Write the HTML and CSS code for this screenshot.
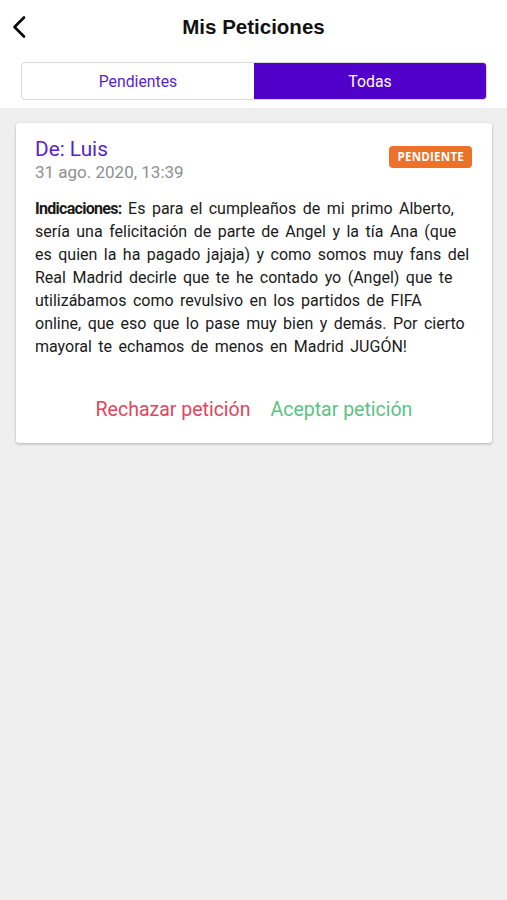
FILE: index.html
```html
<!DOCTYPE html>
<html lang="es">
<head>
<meta charset="utf-8">
<link rel="stylesheet" href="styles.css">
</head>
<body>
<div class="top">
  <header class="bar">
    <button class="back" aria-label="Atrás">
      <svg width="14" height="24" viewBox="0 0 14 24"><path d="M12 2.5 L2.5 12 L12 21.5" fill="none" stroke="#000" stroke-width="2.6" stroke-linecap="round" stroke-linejoin="round"/></svg>
    </button>
    <h1 class="title">Mis Peticiones</h1>
  </header>
  <div class="seg">
    <div class="seg-item">Pendientes</div>
    <div class="seg-item active">Todas</div>
  </div>
</div>
<main class="list">
  <article class="card">
    <div class="card-head">
      <div>
        <div class="from">De: Luis</div>
        <div class="date">31 ago. 2020, 13:39</div>
      </div>
      <span class="badge">PENDIENTE</span>
    </div>
    <p class="body"><b>Indicaciones:</b> Es para el cumpleaños de mi primo Alberto, sería una felicitación de parte de Angel y la tía Ana (que es quien la ha pagado jajaja) y como somos muy fans del Real Madrid decirle que te he contado yo (Angel) que te utilizábamos como revulsivo en los partidos de FIFA online, que eso que lo pase muy bien y demás. Por cierto mayoral te echamos de menos en Madrid JUGÓN!</p>
    <div class="actions">
      <span class="reject">Rechazar petición</span>
      <span class="accept">Aceptar petición</span>
    </div>
  </article>
</main>
</body>
</html>
```
FILE: styles.css
```css
* { box-sizing: border-box; }
html, body { margin: 0; height: 100%; }
body {
  font-family: Roboto, "Liberation Sans", sans-serif;
  background: #efefef;
  color: #111;
}
.top {
  background: #fff;
  padding-bottom: 8px;
}
.bar {
  position: relative;
  height: 54px;
  display: flex;
  align-items: center;
  justify-content: center;
}
.back {
  position: absolute;
  left: 12px;
  top: 15px;
  border: 0;
  background: none;
  padding: 0;
  width: 14px;
  height: 24px;
}
.back svg { display: block; }
.title {
  margin: 0;
  font-family: "Liberation Sans", Arial, sans-serif;
  font-size: 20.5px;
  font-weight: 700;
  color: #111;
}
.seg {
  margin: 8px 20px 0 21px;
  height: 38px;
  display: flex;
  border: 1px solid #d9d9d9;
  border-radius: 4px;
  overflow: hidden;
}
.seg-item {
  flex: 1;
  display: flex;
  align-items: center;
  justify-content: center;
  font-size: 15.8px;
  color: #5a1fc7;
}
.seg-item.active {
  background: #5000c8;
  color: #fff;
}
.list {
  padding: 15px 15px 0 16px;
}
.card {
  background: #fff;
  border-radius: 3px;
  box-shadow: 0 1px 3px rgba(0,0,0,0.28);
  padding: 14px 19px 22px 19px;
}
.card-head {
  display: flex;
  justify-content: space-between;
  align-items: flex-start;
}
.from {
  font-size: 20.8px;
  color: #5a1fc7;
  line-height: 24px;
}
.date {
  font-size: 17px;
  color: #8f8f8f;
  line-height: 22px;
}
.badge {
  margin-top: 9px;
  margin-right: 1px;
  background: #ed7128;
  color: #fff;
  font-family: "Open Sans", sans-serif;
  font-weight: 700;
  font-size: 11.6px;
  line-height: 22px;
  height: 22px;
  padding: 0 8px;
  border-radius: 4px;
  letter-spacing: 0.2px;
}
.body {
  margin: 14px 0 0;
  font-size: 16px;
  line-height: 23px;
  color: #1a1a1a;
  word-spacing: 2.5px;
}
.body b { font-weight: 700; letter-spacing: -0.7px; word-spacing: 2.5px; }
.actions {
  margin-top: 40px;
  display: flex;
  justify-content: center;
  gap: 20px;
  font-size: 19.5px;
}
.reject { color: #e0465a; }
.accept { color: #5cc283; }
```
